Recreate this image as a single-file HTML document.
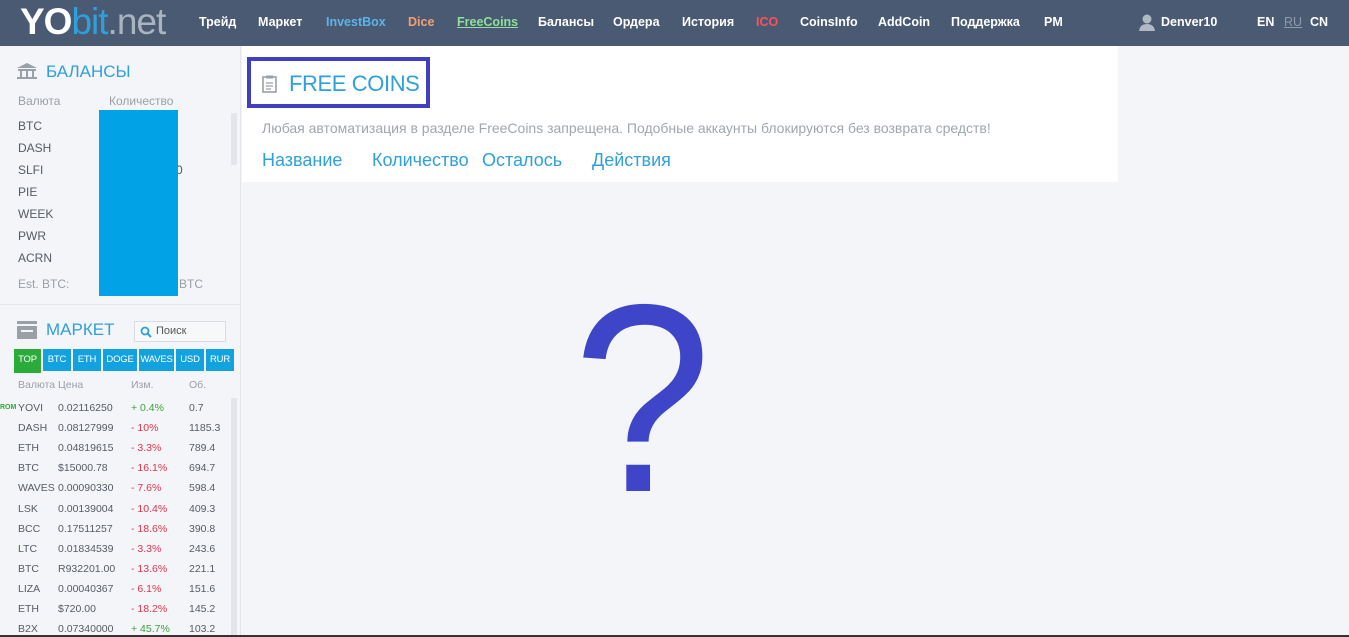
<!DOCTYPE html>
<html><head><meta charset="utf-8">
<style>
*{margin:0;padding:0;box-sizing:border-box}
body{width:1349px;height:637px;overflow:hidden;background:#f4f5f8;font-family:"Liberation Sans","DejaVu Sans",sans-serif;position:relative}
.a{position:absolute;white-space:nowrap}
#nav{position:absolute;left:0;top:0;width:1349px;height:46px;background:#4a5a72}
#nav .l{top:15px;font-size:12.5px;color:#fff;font-weight:bold}
#side{position:absolute;left:0;top:46px;width:241px;height:591px;background:#f4f5f8;border-right:1px solid #e3e5ea}
.g{color:#9a9fa6;font-size:12px}
.c{color:#555b63;font-size:12px}
.t{color:#555b63;font-size:10.5px}
.r{color:#e0344a;font-size:10.5px}
.gr{color:#3aa33a;font-size:10.5px}
.blue{color:#2ea0dc}
#tabs .a{top:349px;height:22px;background:#12a2e0;color:#fff;font-size:9.5px;line-height:22px;text-align:center;letter-spacing:-0.2px}
</style></head><body>
<div id="nav">
<div class="a" style="left:20px;top:1px;font-size:37px;letter-spacing:-1px"><span style="color:#fff;font-weight:bold">YO</span><span style="color:#2ea0dc">bit</span><span style="color:#aab3c0">.net</span></div>
<div class="a l" style="left:199px">Трейд</div>
<div class="a l" style="left:258px">Маркет</div>
<div class="a l" style="left:326px;color:#5ab4ec">InvestBox</div>
<div class="a l" style="left:408px;color:#f0a070">Dice</div>
<div class="a l" style="left:457px;color:#8ee09a;text-decoration:underline">FreeCoins</div>
<div class="a l" style="left:538px">Балансы</div>
<div class="a l" style="left:613px">Ордера</div>
<div class="a l" style="left:682px">История</div>
<div class="a l" style="left:756px;color:#ff5060">ICO</div>
<div class="a l" style="left:800px">CoinsInfo</div>
<div class="a l" style="left:878px">AddCoin</div>
<div class="a l" style="left:951px">Поддержка</div>
<div class="a l" style="left:1044px">PM</div>
<svg class="a" style="left:1139px;top:14px" width="16" height="17"><circle cx="8" cy="5" r="4.5" fill="#b0b8c4"/><path d="M0 17 Q1 10 8 10 Q15 10 16 17Z" fill="#b0b8c4"/></svg>
<div class="a l" style="left:1161px">Denver10</div>
<div class="a l" style="left:1257px">EN</div>
<div class="a l" style="left:1284px;color:#8f9aab;text-decoration:underline;font-weight:normal">RU</div>
<div class="a l" style="left:1310px">CN</div>
</div>
<div id="side"></div>
<svg class="a" style="left:17px;top:63px" width="20" height="16"><path d="M0 5 L10 0 L20 5Z M1 6h18v2H1z M3 8h2v6H3z M9 8h2v6H9z M15 8h2v6h-2z M0 14h20v2H0z" fill="#9aa0a8"/></svg>
<div class="a blue" style="left:46px;top:62px;font-size:17px">БАЛАНСЫ</div>
<div class="a g" style="left:18px;top:94px">Валюта</div>
<div class="a g" style="left:109px;top:94px">Количество</div>
<div class="a" style="left:231px;top:113px;width:6px;height:52px;background:#e3e5ea"></div>
<div class="a c" style="left:18px;top:119px">BTC</div>
<div class="a c" style="left:18px;top:141px">DASH</div>
<div class="a c" style="left:18px;top:163px">SLFI</div>
<div class="a c" style="left:176px;top:163px">0</div>
<div class="a c" style="left:18px;top:185px">PIE</div>
<div class="a c" style="left:18px;top:207px">WEEK</div>
<div class="a c" style="left:18px;top:229px">PWR</div>
<div class="a c" style="left:18px;top:251px">ACRN</div>
<div class="a g" style="left:18px;top:277px">Est. BTC:</div>
<div class="a g" style="left:179px;top:277px">BTC</div>
<div class="a" style="left:99px;top:110px;width:79px;height:186px;background:#02a3e6"></div>
<div class="a" style="left:0;top:304px;width:241px;height:1px;background:#e3e5ea"></div>
<svg class="a" style="left:17px;top:321px" width="20" height="18"><rect x="0" y="0" width="20" height="3" fill="#9aa0a8"/><rect x="0" y="5" width="20" height="13" fill="#9aa0a8"/><rect x="4" y="9" width="12" height="2" fill="#f4f5f8"/></svg>
<div class="a blue" style="left:46px;top:320px;font-size:17px">МАРКЕТ</div>
<div class="a" style="left:134px;top:321px;width:92px;height:21px;border:1px solid #d9dde3;background:#f7f8fa"></div>
<svg class="a" style="left:140px;top:326px" width="12" height="12"><circle cx="5" cy="5" r="3.5" stroke="#2ea0dc" stroke-width="1.8" fill="none"/><path d="M7.5 7.5L11 11" stroke="#2ea0dc" stroke-width="2"/></svg>
<div class="a" style="left:156px;top:325px;font-size:11px;color:#555">Поиск</div>
<div id="tabs">
<div class="a" style="left:14px;width:27px;top:349px;height:24px;background:#2bab3a">TOP</div>
<div class="a" style="left:43px;width:28px">BTC</div>
<div class="a" style="left:73px;width:28px">ETH</div>
<div class="a" style="left:103px;width:34px">DOGE</div>
<div class="a" style="left:139px;width:35px">WAVES</div>
<div class="a" style="left:176px;width:28px">USD</div>
<div class="a" style="left:206px;width:28px">RUR</div>
</div>
<div class="a g" style="left:18px;top:379px;font-size:10.5px">Валюта</div>
<div class="a g" style="left:58px;top:379px;font-size:10.5px">Цена</div>
<div class="a g" style="left:131px;top:379px;font-size:10.5px">Изм.</div>
<div class="a g" style="left:189px;top:379px;font-size:10.5px">Об.</div>
<div class="a" style="left:231px;top:398px;width:6px;height:239px;background:#e3e5ea"></div>
<div class="a" style="left:0;top:404px;font-size:7px;color:#2bab3a;font-weight:bold">ROM</div>
<div id="rows"></div>
<script>
var d=[["YOVI","0.02116250","+ 0.4%","0.7"],["DASH","0.08127999","- 10%","1185.3"],["ETH","0.04819615","- 3.3%","789.4"],["BTC","$15000.78","- 16.1%","694.7"],["WAVES","0.00090330","- 7.6%","598.4"],["LSK","0.00139004","- 10.4%","409.3"],["BCC","0.17511257","- 18.6%","390.8"],["LTC","0.01834539","- 3.3%","243.6"],["BTC","R932201.00","- 13.6%","221.1"],["LIZA","0.00040367","- 6.1%","151.6"],["ETH","$720.00","- 18.2%","145.2"],["B2X","0.07340000","+ 45.7%","103.2"]];
var h="";d.forEach(function(r,i){var y=402+i*20.1;h+='<div class="a t" style="left:18px;top:'+y+'px">'+r[0]+'</div><div class="a t" style="left:58px;top:'+y+'px">'+r[1]+'</div><div class="a '+(r[2][0]=="+"?"gr":"r")+'" style="left:131px;top:'+y+'px">'+r[2]+'</div><div class="a t" style="left:189px;top:'+y+'px">'+r[3]+'</div>';});
document.getElementById("rows").innerHTML=h;
</script>
<div class="a" style="left:242px;top:46px;width:876px;height:136px;background:#fff"></div>
<div class="a" style="left:247px;top:57px;width:183px;height:51px;border:4px solid #3f3fbf"></div>
<svg class="a" style="left:262px;top:75px" width="15" height="18"><rect x="1" y="2" width="13" height="15" fill="none" stroke="#9aa0a8" stroke-width="1.6"/><rect x="4" y="0.5" width="7" height="3" fill="#9aa0a8"/><path d="M4 8h7M4 11h7M4 14h5" stroke="#9aa0a8" stroke-width="1.3"/></svg>
<div class="a blue" style="left:289px;top:71px;font-size:22px;letter-spacing:-0.4px">FREE COINS</div>
<div class="a" style="left:262px;top:120px;font-size:14px;color:#a0a6ae">Любая автоматизация в разделе FreeCoins запрещена. Подобные аккаунты блокируются без возврата средств!</div>
<div class="a blue" style="left:262px;top:150px;font-size:18px">Название</div>
<div class="a blue" style="left:372px;top:150px;font-size:18px">Количество</div>
<div class="a blue" style="left:482px;top:150px;font-size:18px">Осталось</div>
<div class="a blue" style="left:592px;top:150px;font-size:18px">Действия</div>
<div class="a" style="left:573px;top:264px;font-size:268px;line-height:268px;color:#3f45c8;transform:scaleX(0.93);transform-origin:left top">?</div>
<div class="a" style="left:0;top:635px;width:1349px;height:2px;background:#333"></div>
</body></html>
